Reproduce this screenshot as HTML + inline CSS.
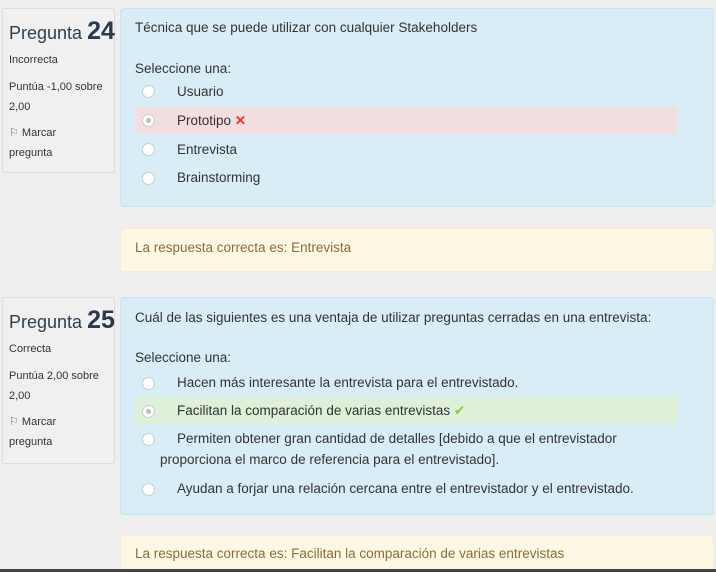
<!DOCTYPE html>
<html style="overflow:hidden;height:572px"><head><meta charset="utf-8"><style>
body{margin:0;width:716px;height:572px;background:#efefef;font-family:"Liberation Sans",sans-serif;color:#333;position:relative;overflow:hidden}
.abs{position:absolute}
.info{left:2px;width:111px;background:#f0f0f0;border:1px solid #ddd;border-radius:2px;font-size:11px;line-height:20px;color:#333}
.info .h{font-size:18px;color:#2f4050;padding:9px 0 0 6px;line-height:26px;white-space:nowrap}
.info .h b{font-size:25px;color:#2a3a4a}
.info .t{padding-left:6px}
.q{left:120px;width:592px;background:#d9edf7;border:1px solid #bce8f1;border-radius:4px;font-size:13.5px;color:#333}
.fb{left:120px;width:592px;background:#fcf8e3;border:1px solid #faebcc;border-radius:4px;font-size:13.5px;color:#8a6d3b;overflow:hidden}
.r{position:absolute;width:11px;height:11px;border-radius:50%;background:#fff;border:1px solid #ccc;left:21px}
.r.s::after{content:"";position:absolute;left:3px;top:3px;width:5px;height:5px;border-radius:50%;background:#bbb}
.l{position:absolute;left:56px}
.hl{position:absolute;left:14px;width:542px;height:27px}
</style></head><body>
<div class="abs info" style="top:8px;height:163px">
<div class="h">Pregunta <b>24</b></div>
<div class="t" style="margin-top:4px">Incorrecta</div>
<div class="t" style="margin-top:7px">Puntúa -1,00 sobre<br>2,00</div>
<div class="t" style="margin-top:6px"><span style="color:#777">&#9872;</span> Marcar<br>pregunta</div>
</div>
<div class="abs q" style="top:8px;height:197px">
<div class="abs" style="left:14px;top:11px">Técnica que se puede utilizar con cualquier Stakeholders</div>
<div class="abs" style="left:14px;top:52px">Seleccione una:</div>
<div class="r" style="top:76px"></div><div class="l" style="top:75px">Usuario</div>
<div class="hl" style="top:98px;background:#f2dede"></div>
<div class="r s" style="top:105px"></div><div class="l" style="top:104px">Prototipo <span style="color:#e33;font-weight:bold">✕</span></div>
<div class="r" style="top:134px"></div><div class="l" style="top:133px">Entrevista</div>
<div class="r" style="top:163px"></div><div class="l" style="top:161px">Brainstorming</div>
</div>
<div class="abs fb" style="top:228px;height:42px"><div class="abs" style="left:14px;top:11px">La respuesta correcta es: Entrevista</div></div>

<div class="abs info" style="top:297px;height:165px">
<div class="h">Pregunta <b>25</b></div>
<div class="t" style="margin-top:4px">Correcta</div>
<div class="t" style="margin-top:7px">Puntúa 2,00 sobre<br>2,00</div>
<div class="t" style="margin-top:6px"><span style="color:#777">&#9872;</span> Marcar<br>pregunta</div>
</div>
<div class="abs q" style="top:297px;height:216px">
<div class="abs" style="left:14px;top:12px">Cuál de las siguientes es una ventaja de utilizar preguntas cerradas en una entrevista:</div>
<div class="abs" style="left:14px;top:52px">Seleccione una:</div>
<div class="r" style="top:79px"></div><div class="l" style="top:77px">Hacen más interesante la entrevista para el entrevistado.</div>
<div class="hl" style="top:99px;background:#dff0d8"></div>
<div class="r s" style="top:107px"></div><div class="l" style="top:105px">Facilitan la comparación de varias entrevistas <span style="color:#8c3">✔</span></div>
<div class="r" style="top:135px"></div><div class="l" style="top:133px">Permiten obtener gran cantidad de detalles [debido a que el entrevistador</div>
<div class="abs" style="left:39px;top:154px">proporciona el marco de referencia para el entrevistado].</div>
<div class="r" style="top:185px"></div><div class="l" style="top:183px">Ayudan a forjar una relación cercana entre el entrevistador y el entrevistado.</div>
</div>
<div class="abs fb" style="top:535px;height:33px"><div class="abs" style="left:14px;top:10px">La respuesta correcta es: Facilitan la comparación de varias entrevistas</div></div>
<div class="abs" style="left:0;top:569px;width:716px;height:3px;background:#444"></div>
</body></html>
